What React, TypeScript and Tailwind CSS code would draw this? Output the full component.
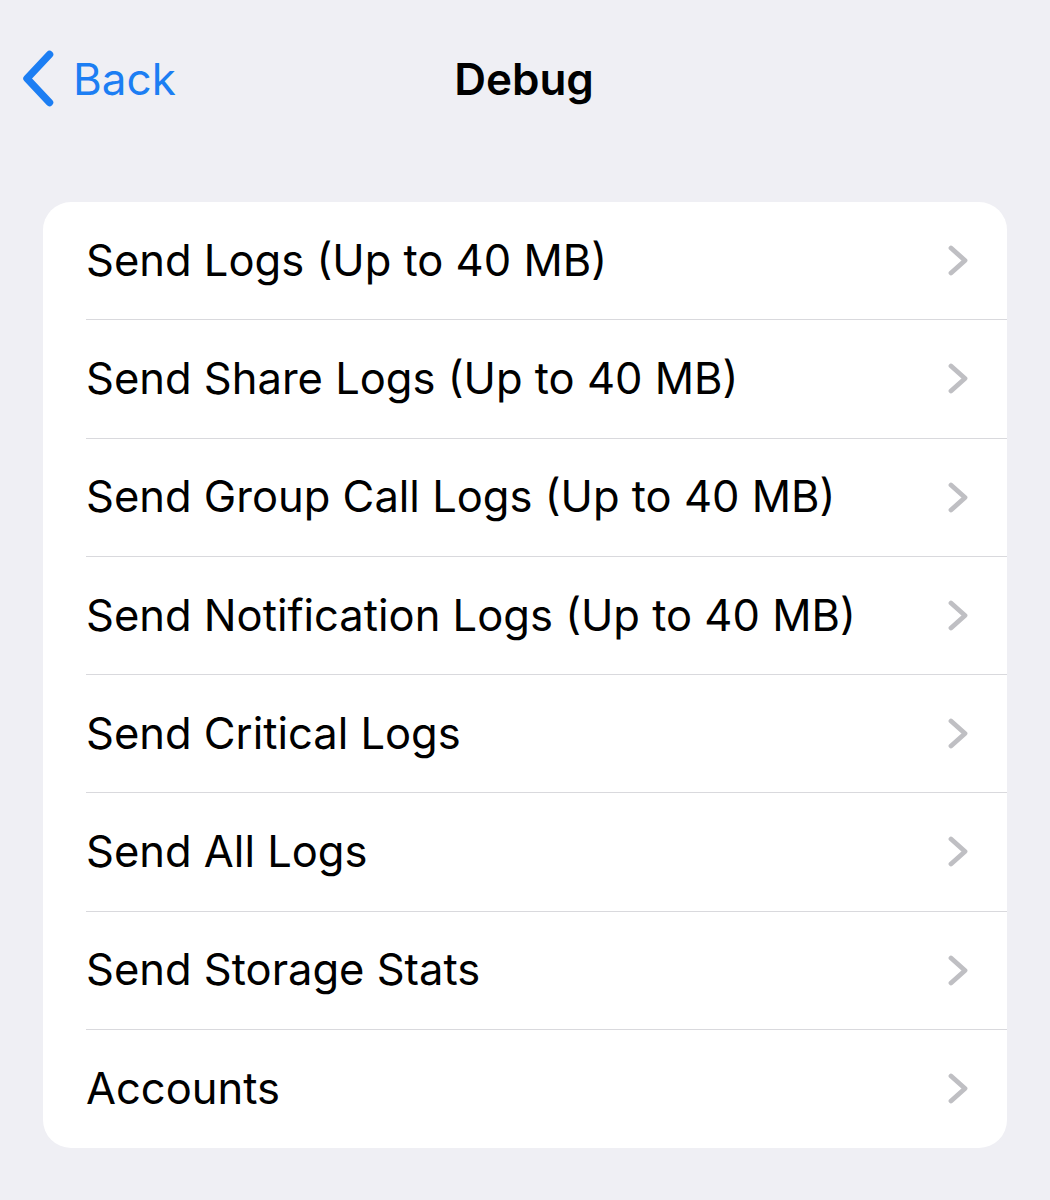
const items = [
  "Send Logs (Up to 40 MB)",
  "Send Share Logs (Up to 40 MB)",
  "Send Group Call Logs (Up to 40 MB)",
  "Send Notification Logs (Up to 40 MB)",
  "Send Critical Logs",
  "Send All Logs",
  "Send Storage Stats",
  "Accounts",
];

function BackChevron() {
  return (
    <svg width="32" height="57" viewBox="0 0 32 57" fill="none">
      <polyline
        points="27.5,4.5 5,28.5 27.5,52.5"
        stroke="#1c7ef3"
        strokeWidth="7.5"
        strokeLinecap="round"
        strokeLinejoin="round"
      />
    </svg>
  );
}

function RowChevron() {
  return (
    <svg width="20" height="31" viewBox="0 0 20 31" fill="none">
      <polyline
        points="3,3 17,15.5 3,28"
        stroke="#bfbfc3"
        strokeWidth="4.8"
        strokeLinecap="round"
        strokeLinejoin="round"
      />
    </svg>
  );
}

export default function App() {
  return (
    <div
      className="min-h-[1200px] w-[1050px] bg-[#efeff4] pt-[50px]"
      style={{ fontFamily: "Inter, 'Liberation Sans', sans-serif" }}
    >
      <header className="grid h-[57px] grid-cols-[1fr_auto_1fr] items-center">
        <div className="flex items-center pl-[22px]">
          <BackChevron />
          <span className="ml-[19px] text-[44px] leading-none text-[#1c7ef3]">Back</span>
        </div>
        <h1 className="-translate-x-[1px] text-[44px] font-semibold leading-none text-black">Debug</h1>
        <div />
      </header>

      <ul className="mx-[43px] mt-[95px] overflow-hidden rounded-[28px] bg-white">
        {items.map((label, i) => (
          <li key={label} className="pl-[43px]">
            <div
              className={`flex h-[118.25px] items-center justify-between pr-[39px] ${
                i < items.length - 1 ? "border-b border-[#d9d9dd]" : ""
              }`}
            >
              <span className="text-[43.5px] leading-none text-black">{label}</span>
              <RowChevron />
            </div>
          </li>
        ))}
      </ul>
    </div>
  );
}
